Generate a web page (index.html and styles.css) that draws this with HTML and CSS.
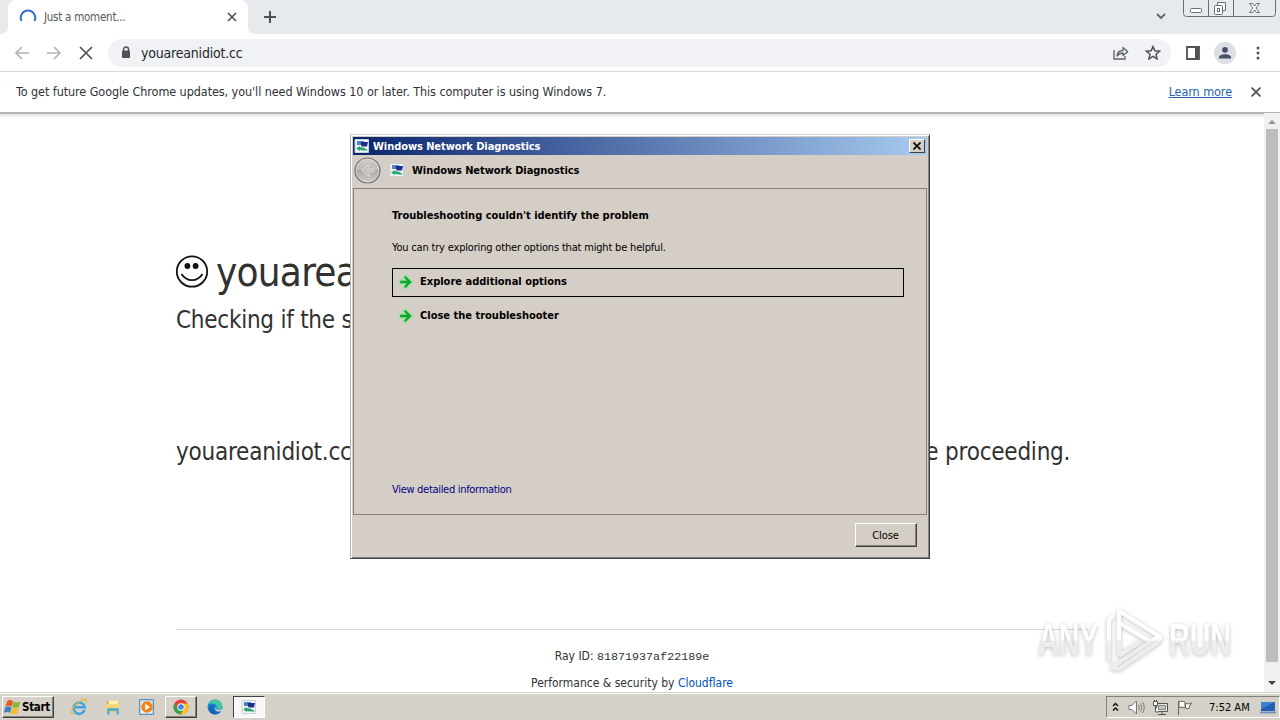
FILE: index.html
```
<!DOCTYPE html>
<html lang="en">
    <head>
        <meta charset="UTF-8">
        <title>Just a moment...</title>
        <link rel="stylesheet" href="styles.css">
    </head>

    <body>
        <!-- Browser -->
        <div class="tabstrip">
            <div class="tab-edge"></div>
            <div class="tab">
                <svg class="spinner" width="18" height="18" viewBox="0 0 18 18"><path d="M2.6 13A7.2 7.2 0 1 1 15.4 13" fill="none" stroke="#2f6fca" stroke-width="2"/></svg>
                <span class="tab-title">Just a moment...</span>
                <svg width="10" height="10" viewBox="0 0 10 10"><path d="M1 1l8 8M9 1l-8 8" stroke="#505256" stroke-width="1.7"/></svg>
            </div>
            <div class="tab-rest">
                <svg class="plus" width="12" height="12" viewBox="0 0 12 12"><path d="M6 0v12M0 6h12" stroke="#505256" stroke-width="2"/></svg>
                <svg class="chevron" width="10" height="7" viewBox="0 0 10 7"><path d="M1 1l4 4 4-4" fill="none" stroke="#606368" stroke-width="1.8"/></svg>
                <div class="window-buttons">
                    <svg width="98" height="17" viewBox="0 0 98 17" fill="none" stroke="#6a6e74">
                        <path d="M.5 0v13.5q0 3 3 3h86q3 0 3-3V0M25.5 0v16M50.5 0v16"/>
                        <rect x="7.5" y="8.5" width="11" height="4" rx="1" fill="#fff"/>
                        <path d="M34.5 5v-2.5h8v8h-3" fill="#fff"/>
                        <rect x="31.5" y="5.5" width="8" height="9" rx="1" fill="#fff"/>
                        <rect x="34.5" y="8.5" width="2" height="3"/>
                        <path d="M66.5 3.5h3l2 2.5 2-2.5h3L73 8l3.500 4.500h-3l-2-2.500-2 2.500h-3L70 8z" fill="#fff"/>
                    </svg>
                </div>
            </div>
        </div>

        <div class="toolbar">
            <svg width="16" height="14" viewBox="0 0 16 14" fill="none" stroke="#b2b3b5" stroke-width="1.7"><path d="M15 7H2M8 1L2 7l6 6"/></svg>
            <svg width="16" height="14" viewBox="0 0 16 14" fill="none" stroke="#b2b3b5" stroke-width="1.7"><path d="M1 7h13M8 1l6 6-6 6"/></svg>
            <svg width="14" height="14" viewBox="0 0 14 14" stroke="#505256" stroke-width="1.7"><path d="M1 1l12 12M13 1L1 13"/></svg>
            <div class="omnibox">
                <svg width="10" height="13" viewBox="0 0 10 13"><path d="M2.5 5V3.5a2.5 2.5 0 0 1 5 0V5" fill="none" stroke="#505256" stroke-width="1.5"/><rect x="1" y="4.5" width="8" height="7.5" rx="1" fill="#505256"/></svg>
                <span class="url">youareanidiot.cc</span>
                <svg class="share" width="16" height="14" viewBox="0 0 16 14" fill="none" stroke="#5f6368" stroke-width="1.3"><path d="M1 4v9h11v-3"/><path d="M4 10c.3-3.5 2.5-5.4 6-5.5v-3l4.700 4.200L10 9.600V7C7.500 7 5.700 7.800 4 10z" stroke-linejoin="round"/></svg>
                <svg width="16" height="15" viewBox="0 0 16 15"><path d="M8 1.5l1.9 4.3 4.7.4-3.6 3.1 1.1 4.6L8 11.4l-4.1 2.5L5 9.300 1.400 6.200l4.700-.4z" fill="none" stroke="#505256" stroke-width="1.5"/></svg>
            </div>
            <svg class="panel-icon" width="14" height="14" viewBox="0 0 14 14"><path d="M1 1h12v12H1z" fill="none" stroke="#505256" stroke-width="1.8"/><path d="M9 1h4v12H9z" fill="#505256"/></svg>
            <svg class="avatar" width="22" height="22" viewBox="0 0 22 22"><circle cx="11" cy="11" r="11" fill="#dcdfe5"/><circle cx="11" cy="7.8" r="2.9" fill="#47506b"/><path d="M5 16.5v-1.300c0-4 12-4 12 0v1.300z" fill="#47506b"/></svg>
            <svg class="dots" width="4" height="14" viewBox="0 0 4 14" fill="#505256"><circle cx="2" cy="2" r="1.5"/><circle cx="2" cy="7" r="1.5"/><circle cx="2" cy="12" r="1.5"/></svg>
        </div>

        <div class="infobar">
            <span class="info-text">To get future Google Chrome updates, you'll need Windows 10 or later. This computer is using Windows 7.</span>
            <a class="learn-more">Learn more</a>
            <svg class="info-close" width="10" height="10" viewBox="0 0 10 10"><path d="M.6.6l8.800 8.800M9.400.6L.6 9.400" stroke="#505256" stroke-width="1.8"/></svg>
        </div>

        <div class="viewport">
            <div class="page">
                <div class="site">
                    <svg width="34" height="34" viewBox="0 0 34 34"><circle cx="17" cy="16.500" r="15.2" fill="#fff" stroke="#111" stroke-width="1.8"/><circle cx="12.400" cy="11" r="2.900" fill="#111"/><circle cx="20.600" cy="11" r="2.900" fill="#111"/><path d="M6.500 19q4 6.200 10.500 6.200T27.500 19" fill="none" stroke="#111" stroke-width="1.8"/></svg>
                    <h1>youareanidiot.cc</h1>
                </div>
                <h2>Checking if the site connection is secure</h2>
                <p class="review">youareanidiot.cc needs to review the security of your connection before proceeding.</p>
                <div class="footer">
                    <div class="ray">Ray ID: <code>81871937af22189e</code></div>
                    <div class="perf">Performance &amp; security by <a>Cloudflare</a></div>
                </div>
            </div>
            <div class="scrollbar">
                <svg width="8" height="4" viewBox="0 0 8 4"><path d="M0 4l4-4 4 4z" fill="#929292"/></svg>
                <div class="thumb"></div>
                <svg width="8" height="4" viewBox="0 0 8 4"><path d="M0 0l4 4 4-4z" fill="#444"/></svg>
            </div>
        </div>

        <!-- Taskbar -->
        <div class="taskbar">
            <div class="start">
                <svg width="17" height="16" viewBox="0 0 16 15"><path d="M3 2q2-2 5.500 0L7.300 7Q4 5.500 1.300 7z" fill="#e75a25"/><path d="M9 2.500q3 1.300 6.500 0L14 7.500q-3 1.200-6.200 0z" fill="#82b83b"/><path d="M1.200 7.800q3-1.500 5.800 0L5.800 13Q3 11.500-.2 13z" fill="#3982c7"/><path d="M7.600 8.300q2.900 1.300 6.200 0l-1.300 5.200q-3 1.200-6.200 0z" fill="#f4bd27"/></svg>
                <span>Start</span>
            </div>
            <div class="task">
                <svg width="18" height="18" viewBox="0 0 18 18" fill="none"><path d="M14.600 12A5.600 5.600 0 1 1 14.800 9.300H5" stroke="#3aa5e0" stroke-width="2.5"/><path d="M3.300 16C-1 16 3 8 9 4s9-3 6.500 1" stroke="#e7b932" stroke-width="1.3"/></svg>
            </div>
            <div class="task">
                <svg width="18" height="18" viewBox="0 0 18 18"><path d="M2 3h5l1 1.500h7V14H2z" fill="#e0bd5c"/><path d="M5 2.500h9v5H5z" fill="#fff2ae"/><path d="M1.500 6h14v7.500h-14z" fill="#f0d878"/><path d="M3 16.500V12q0-2 2-2h8q2 0 2 2v4.500h-2.500V13h-7v3.500z" fill="#5aaed2"/></svg>
            </div>
            <div class="task">
                <svg width="18" height="18" viewBox="0 0 18 18"><path d="M1.500 1.500h14v15h-14z" fill="#b8d5ea" stroke="#5893bf"/><path d="M3 4h11v11H3z" fill="#eef4f7"/><circle cx="9" cy="9" r="5.800" fill="#f18413"/><path d="M7.200 5.800v6.400L12 9z" fill="#fff"/></svg>
            </div>
            <div class="task raised">
                <svg width="16" height="16" viewBox="0 0 16 16"><circle cx="8" cy="8" r="7.5" fill="#e54235"/><path d="M1.500 4.300A7.500 7.500 0 0 0 7.500 15.500L11.300 9.600 8 8 4.700 9.700z" fill="#33a552"/><path d="M8 4.500h6.600A7.500 7.500 0 0 1 7.300 15.500L11.300 9.500z" fill="#fbc116"/><circle cx="8" cy="8" r="3.700" fill="#fff"/><circle cx="8" cy="8" r="2.800" fill="#4285e8"/></svg>
            </div>
            <div class="task">
                <svg width="16" height="16" viewBox="0 0 16 16"><circle cx="8" cy="8" r="7.5" fill="#1681cb"/><path d="M1 6C3-1 14-1 15.500 7c.4 3.500-4.500 4-6 2C11 5 5 3 1 6z" fill="#42c7a0"/><path d="M6.200 8c-1 4 4.500 6 8 4C11 17 2.500 16.500 2 10c0-3 3-4.500 5.500-3.500z" fill="#1465b5"/><path d="M8.500 8.500c1 3 4 2.500 7.500 1.500l-1.500 2c-4 1.500-7.500-.5-6-3.500z" fill="#d5d0c7"/></svg>
            </div>
            <div class="task pressed">
                <svg width="16" height="14" viewBox="0 0 16 14"><use href="#diag"/></svg>
            </div>
            <div class="tray">
                <svg width="7" height="10" viewBox="0 0 7 10" fill="none" stroke="#111" stroke-width="1.4"><path d="M1 4l2.500-2.500L6 4M1 8.500L3.500 6 6 8.500"/></svg>
                <svg class="speaker" width="17" height="15" viewBox="0 0 17 15" fill="none" stroke="#777"><path d="M1 5.500h3L8.500 1v13L4 9.500H1z" fill="#fff"/><path d="M10.500 5q1.500 2.500 0 5M12.500 3.500q2.700 4 0 8M14.500 2q3.500 5.500 0 11"/></svg>
                <svg class="network" width="17" height="15" viewBox="0 0 17 15" fill="none" stroke="#555"><path d="M4.500 3.500h11v8h-11z" fill="#e7e5e1"/><path d="M6.500 5.500h7v4h-7z" fill="#c5c2be" stroke="#888"/><path d="M10 12v2M6 14.500h8"/><path d="M1.500 1.500h4v4h-4zM2.500 0v1M4.500 0v1M3.500 6v6h3" fill="#fff"/></svg>
                <svg class="flag" width="16" height="15" viewBox="0 0 16 15" fill="#fff" stroke="#666"><path d="M1.500 1v14M2 1.500q3-1 6 .5v6q-3-1.500-6-.5zM8.500 3.500q3 1 6-.5l-2 3-.5 2.500q-2 .5-3.500-.5z"/></svg>
                <span class="clock">7:52 AM</span>
                <svg class="desktop" width="16" height="13" viewBox="0 0 16 13"><path d="M1 1h14v9H1z" fill="#255fb3"/><path d="M1 1h14L1 8z" fill="#3f80cc"/><path d="M0 11.500h16" stroke="#7097ba" stroke-width="2"/></svg>
            </div>
        </div>

        <!-- Dialog window -->
        <div class="dialog">
            <div class="titlebar">
                <svg width="16" height="14" viewBox="0 0 16 14">
                    <g id="diag"><path d="M1 .5h13.500v13H1z" fill="#f3f6f8" stroke="#c9d0d8"/><path d="M3 2h7v4H3z" fill="#4f86bf"/><path d="M6.500 3H14l-1 4.500H7.500z" fill="#1c2f91"/><path d="M2 9.500L6 7v1.300c4 0 5 1 8 3-3 .5-4.500.2-8-.3v1z" fill="#2aa66d"/></g>
                </svg>
                <span>Windows Network Diagnostics</span>
                <div class="close-box">
                    <svg width="8" height="8" viewBox="0 0 8 8"><path d="M.5.5l7 7M7.500.5l-7 7" stroke="#000" stroke-width="1.6"/></svg>
                </div>
            </div>
            <div class="navbar">
                <svg width="27" height="27" viewBox="0 0 27 27"><defs><linearGradient id="back" x2="0" y2="1"><stop stop-color="#cfccc8"/><stop offset=".48" stop-color="#bdbab7"/><stop offset=".5" stop-color="#aaa8a5"/><stop offset="1" stop-color="#d0cecb"/></linearGradient></defs><circle cx="13.5" cy="13.5" r="12.5" fill="url(#back)" stroke="#77736f" stroke-width="1.2"/><circle cx="13.5" cy="13.5" r="11.2" fill="none" stroke="#dedbd7" stroke-width=".7"/><path d="M20 12h-7l3-3.500h-3l-5.500 5 5.500 5h3L13 15h7z" fill="#c2bfbc" stroke="#d8d5d2"/></svg>
                <svg class="nav-icon" width="16" height="14" viewBox="0 0 16 14"><use href="#diag"/></svg>
                <span>Windows Network Diagnostics</span>
            </div>
            <div class="content">
                <h3>Troubleshooting couldn't identify the problem</h3>
                <p>You can try exploring other options that might be helpful.</p>
                <div class="option selected">
                    <svg width="16" height="16" viewBox="0 0 16 16"><path id="arrow" d="M1.500 6h6L5.200 3.200 7.500 1l7 7-7 7-2.300-2.200L7.500 10h-6z" fill="#0fa52f" stroke="#98e29b" stroke-width="1.3"/></svg>
                    <span>Explore additional options</span>
                </div>
                <div class="option">
                    <svg width="16" height="16" viewBox="0 0 16 16"><use href="#arrow"/></svg>
                    <span>Close the troubleshooter</span>
                </div>
                <a class="details">View detailed information</a>
            </div>
            <div class="dialog-footer">
                <button>Close</button>
            </div>
        </div>

        <!-- Watermark -->
        <div class="watermark">
            <span>ANY</span>
            <svg width="60" height="64" viewBox="0 0 60 64" fill="none" stroke="url(#fade)" stroke-width="4" stroke-linejoin="round"><defs><linearGradient id="fade" gradientUnits="userSpaceOnUse" x1="0" y1="0" x2="0" y2="64"><stop offset=".5" stop-color="#fff"/><stop offset=".52" stop-color="#ebebeb"/></linearGradient></defs><path d="M5 53V13q0-3 4-5M15 48V3l40 25q3 3-1 6L16 60q-5 2-8-1l47-31M15 15l32 19M15 48l21-14"/></svg>
            <span class="run">RUN</span>
        </div>
    </body>
</html>
```
FILE: styles.css
```
* {
    box-sizing: border-box;
    margin: 0;
    padding: 0;
}
body {
    display: flex;
    flex-direction: column;
    width: 1280px;
    height: 720px;
    overflow: hidden;
    background-color: #fff;
    color: #313131;
    font-family: "DejaVu Sans Condensed", "DejaVu Sans", sans-serif;
    font-stretch: condensed;
}
svg {
    display: block;
    flex-shrink: 0;
}

/* Browser */
.tabstrip {
    display: flex;
    height: 34px;
    background: linear-gradient(#e7eaed 12px, #fff 12px);
}
.tab-edge {
    width: 8px;
    background-color: #e7eaed;
    border-bottom-right-radius: 7px;
}
.tab {
    display: flex;
    align-items: center;
    width: 240px;
    padding: 0 11px;
    border-radius: 8px 8px 0 0;
    background-color: #fff;
}
.spinner {
    margin-right: 7px;
}
.tab-title {
    flex: 1;
    font-size: 11.5px;
    letter-spacing: -0.25px;
    color: #55585c;
}
.tab-rest {
    display: flex;
    flex: 1;
    background-color: #e7eaed;
    border-bottom-left-radius: 7px;
}
.plus {
    margin: 11px 0 0 16px;
}
.chevron {
    margin: 13px 17px 0 auto;
}
.window-buttons {
    width: 97px;
}
.toolbar {
    display: flex;
    align-items: center;
    height: 38px;
    padding: 0 20px 0 14px;
    border-bottom: 1px solid #d9dadc;
}
.toolbar > svg:nth-child(-n+2) {
    margin-right: 16px;
}
.toolbar > svg:nth-child(3) {
    margin-left: 1px;
}
.omnibox {
    display: flex;
    align-items: center;
    width: 1064px;
    height: 28px;
    margin-left: 15px;
    padding: 0 10px 0 13px;
    border-radius: 14px;
    background-color: #f0f2f5;
}
.url {
    margin-left: 10px;
    font-size: 14px;
    letter-spacing: -0.2px;
    color: #25272a;
}
.share {
    margin: 0 16px 0 auto;
}
.panel-icon {
    margin-left: 15px;
}
.avatar {
    margin-left: 14px;
}
.dots {
    margin-left: 20px;
}
.infobar {
    display: flex;
    align-items: center;
    height: 41px;
    padding: 0 19px 2px 16px;
    border-bottom: 1px solid #b4b4b4;
    font-size: 12.5px;
    letter-spacing: -0.07px;
    color: #303236;
}
.learn-more {
    margin: 0 19px 0 auto;
    color: #2464ad;
    text-decoration: underline;
}
.info-close {
    margin-top: 2px;
}

/* Page */
.viewport {
    display: flex;
    height: 579px;
    background: linear-gradient(#b8b8b8 1px, #e2e2e2 1px, #f6f6f6 4px, #fff 5px);
}
.page {
    width: 1264px;
    padding: 137px 176px 0;
}
.site {
    display: flex;
    align-items: center;
    height: 44px;
}
.site svg {
    margin: 0 7px 0 -1px;
}
h1 {
    font-size: 40px;
    font-weight: normal;
    line-height: 44px;
    letter-spacing: -0.75px;
}
h2 {
    margin-top: 9px;
    font-size: 24px;
    font-weight: normal;
    line-height: 34px;
    letter-spacing: -0.25px;
}
.review {
    margin-top: 98px;
    font-size: 24px;
    line-height: 34px;
    letter-spacing: -0.23px;
    white-space: nowrap;
}
.footer {
    margin-top: 160px;
    padding-top: 13px;
    border-top: 1px solid #d9d9d9;
    font-size: 12px;
    line-height: 26px;
    text-align: center;
}
.footer code {
    font-family: "Liberation Mono", monospace;
    font-size: 11.7px;
}
.footer a {
    color: #0051c3;
}
.scrollbar {
    display: flex;
    flex-direction: column;
    align-items: center;
    width: 16px;
    padding: 7px 1px 7px;
    background-color: #f1f1f1;
}
.thumb {
    width: 12px;
    height: 533px;
    margin: 5px 0 auto;
    background-color: #bdbdbd;
}

/* Taskbar */
.taskbar {
    display: flex;
    align-items: center;
    height: 28px;
    padding: 1px 0 0 2px;
    border-top: 1px solid #d4d0c8;
    box-shadow: inset 0 1px #fff;
    background-color: #d5d0c8;
    color: #000;
}
.start {
    display: flex;
    align-items: center;
    gap: 1px;
    width: 52px;
    height: 22px;
    margin-right: 9px;
    padding-left: 1px;
    border: 1px solid;
    border-color: #fff #404040 #404040 #fff;
    box-shadow: inset -1px -1px #85817a;
    font-size: 11.5px;
    font-weight: bold;
    letter-spacing: -0.3px;
}
.task {
    display: flex;
    align-items: center;
    justify-content: center;
    width: 32px;
    height: 22px;
    margin-right: 2px;
}
.raised {
    border: 1px solid;
    border-color: #fff #404040 #404040 #fff;
    box-shadow: inset -1px -1px #85817a;
}
.pressed {
    border: 1px solid;
    border-color: #404040 #fff #fff #404040;
    background-color: #f8f7f5;
}
.tray {
    display: flex;
    align-items: center;
    width: 174px;
    height: 22px;
    margin-left: auto;
    padding: 0 3px 0 5px;
    border: 1px solid;
    border-color: #85817a #fff #fff #85817a;
}
.speaker {
    margin-left: 9px;
}
.network {
    margin-left: 7px;
}
.flag {
    margin-left: 8px;
}
.clock {
    margin-left: 16px;
    font-size: 11px;
    white-space: nowrap;
}
.desktop {
    margin-left: auto;
}

/* Dialog */
.dialog {
    position: absolute;
    left: 350px;
    top: 134px;
    display: flex;
    flex-direction: column;
    width: 580px;
    height: 425px;
    padding: 1px;
    border: 1px solid;
    border-color: #d4d0c8 #404040 #404040 #b7b3ad;
    box-shadow: inset 1px 1px #fff, inset -1px -1px #85817a;
    background-color: #d5cec7;
    color: #000;
    font-size: 11px;
}
.titlebar {
    display: flex;
    align-items: center;
    height: 18px;
    margin: 1px 1px 0;
    padding: 0 2px 0 1px;
    background: linear-gradient(to right, #0b256d, #a6caf0);
    color: #fff;
    font-weight: bold;
}
.titlebar span {
    margin-left: 3px;
}
.titlebar span, .navbar span {
    letter-spacing: -0.07px;
}
.close-box {
    display: flex;
    align-items: center;
    justify-content: center;
    width: 16px;
    height: 14px;
    margin-left: auto;
    border: 1px solid;
    border-color: #fff #404040 #404040 #fff;
    background-color: #d5cec7;
}
.navbar {
    display: flex;
    align-items: center;
    height: 33px;
    padding: 0 0 3px 2px;
    font-weight: bold;
}
.navbar span {
    margin-top: 1px;
}
.nav-icon {
    margin: 0 7px 0 8px;
}
.content {
    height: 327px;
    margin: 0 1px;
    padding: 20px 22px 0 38px;
    border: 1px solid #85817d;
}
h3 {
    height: 14px;
    font-size: 11px;
    line-height: 14px;
}
.content p {
    margin: 18px 0 13px;
    line-height: 14px;
    letter-spacing: -0.18px;
}
.option {
    display: flex;
    align-items: center;
    gap: 6px;
    width: 512px;
    height: 29px;
    margin-bottom: 5px;
    padding: 0 0 1px 5px;
    border: 1px solid transparent;
    font-weight: bold;
}
.option span {
    margin-top: -1px;
}
.selected {
    border-color: #000;
}
.details {
    display: block;
    margin-top: 152px;
    line-height: 14px;
    letter-spacing: -0.3px;
    color: #000080;
}
.dialog-footer {
    display: flex;
    justify-content: flex-end;
    padding: 8px 11px 0;
}
.dialog-footer button {
    width: 62px;
    height: 24px;
    padding-right: 1px;
    border: 1px solid;
    border-color: #fff #404040 #404040 #fff;
    box-shadow: inset -1px -1px #85817a;
    background-color: #d5cec7;
    color: #000;
    font-family: inherit;
    font-size: 11px;
    letter-spacing: -0.1px;
}

/* Watermark */
.watermark {
    position: absolute;
    left: 1038px;
    top: 608px;
    display: flex;
    align-items: center;
    opacity: 0.85;
    filter: drop-shadow(0 1px 2px rgba(0, 0, 0, 0.3));
    font-family: "Liberation Sans", sans-serif;
    font-size: 44px;
    font-weight: bold;
    line-height: 64px;
}
.watermark span {
    width: 66px;
    background: linear-gradient(#fff 50%, #ebebeb 52%);
    background-clip: text;
    -webkit-background-clip: text;
    color: transparent;
    transform: scaleX(0.65);
    transform-origin: left;
    padding-right: 100px;
    margin-right: -100px;
    box-sizing: content-box;
}
.watermark .run {
    margin-left: 5px;
}
```
